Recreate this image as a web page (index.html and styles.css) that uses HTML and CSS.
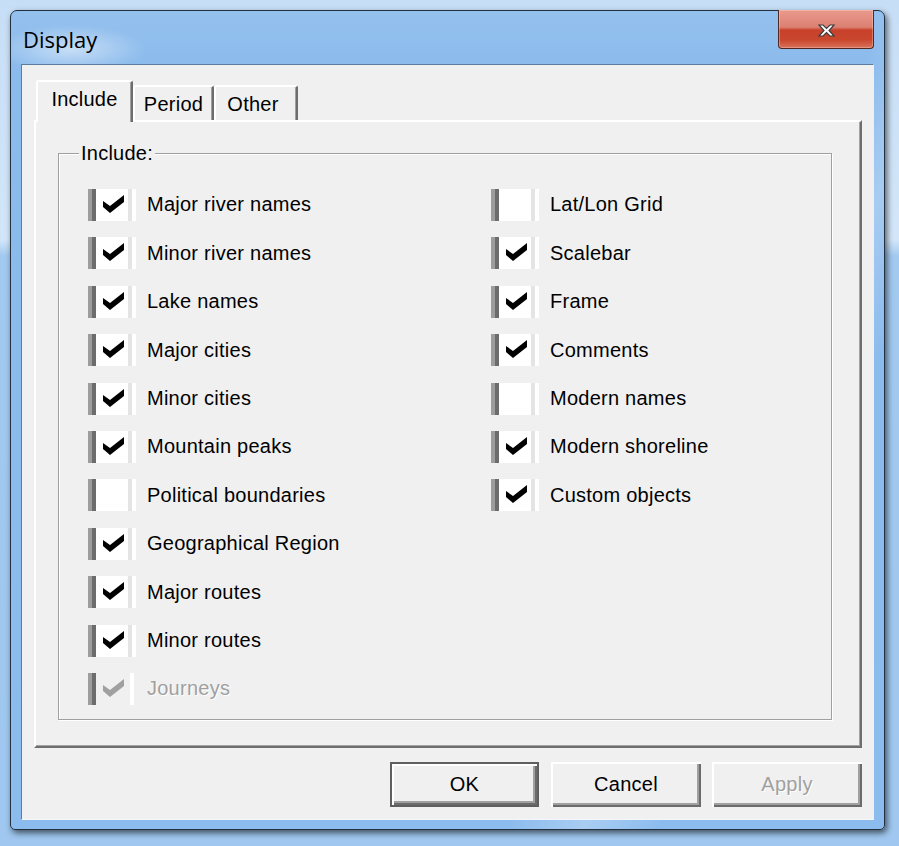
FILE: index.html
```html
<!DOCTYPE html>
<html lang="en">
<head>
    <meta charset="utf-8">
    <title>Display</title>
    <link rel="stylesheet" href="styles.css">
</head>
<body>
    <div class="window">
        <div class="titlebar">
            <div class="title">Display</div>
            <button class="close" title="Close">
                <svg width="19" height="13" viewBox="0 0 19 13">
                    <polygon points="2,1 6,1 9.5,4.5 13,1 17,1 12,6.5 17,12 13,12 9.5,8.5 6,12 2,12 7,6.5" fill="#fff" stroke="#3d3d3d" stroke-width="1.2"/>
                </svg>
            </button>
        </div>
        <div class="client">
            <div class="tabs">
                <div class="tab tab-include active">Include</div>
                <div class="tab tab-period">Period</div>
                <div class="tab tab-other">Other</div>
            </div>
            <div class="panel">
                <div class="group">
                    <span class="legend">Include:</span>
                    <div class="columns">
                        <div class="column column-left">
                            <div class="option"><span class="box"><svg class="check" width="21" height="18" viewBox="0 0 21 18"><polygon points="0,6 7,11 21,0 21,7 7,18 0,12"/></svg></span>Major river names</div>
                            <div class="option"><span class="box"><svg class="check" width="21" height="18" viewBox="0 0 21 18"><polygon points="0,6 7,11 21,0 21,7 7,18 0,12"/></svg></span>Minor river names</div>
                            <div class="option"><span class="box"><svg class="check" width="21" height="18" viewBox="0 0 21 18"><polygon points="0,6 7,11 21,0 21,7 7,18 0,12"/></svg></span>Lake names</div>
                            <div class="option"><span class="box"><svg class="check" width="21" height="18" viewBox="0 0 21 18"><polygon points="0,6 7,11 21,0 21,7 7,18 0,12"/></svg></span>Major cities</div>
                            <div class="option"><span class="box"><svg class="check" width="21" height="18" viewBox="0 0 21 18"><polygon points="0,6 7,11 21,0 21,7 7,18 0,12"/></svg></span>Minor cities</div>
                            <div class="option"><span class="box"><svg class="check" width="21" height="18" viewBox="0 0 21 18"><polygon points="0,6 7,11 21,0 21,7 7,18 0,12"/></svg></span>Mountain peaks</div>
                            <div class="option"><span class="box"></span>Political boundaries</div>
                            <div class="option"><span class="box"><svg class="check" width="21" height="18" viewBox="0 0 21 18"><polygon points="0,6 7,11 21,0 21,7 7,18 0,12"/></svg></span>Geographical Region</div>
                            <div class="option"><span class="box"><svg class="check" width="21" height="18" viewBox="0 0 21 18"><polygon points="0,6 7,11 21,0 21,7 7,18 0,12"/></svg></span>Major routes</div>
                            <div class="option"><span class="box"><svg class="check" width="21" height="18" viewBox="0 0 21 18"><polygon points="0,6 7,11 21,0 21,7 7,18 0,12"/></svg></span>Minor routes</div>
                            <div class="option disabled"><span class="box"><svg class="check" width="21" height="18" viewBox="0 0 21 18"><polygon points="0,6 7,11 21,0 21,7 7,18 0,12"/></svg></span>Journeys</div>
                        </div>
                        <div class="column">
                            <div class="option"><span class="box"></span>Lat/Lon Grid</div>
                            <div class="option"><span class="box"><svg class="check" width="21" height="18" viewBox="0 0 21 18"><polygon points="0,6 7,11 21,0 21,7 7,18 0,12"/></svg></span>Scalebar</div>
                            <div class="option"><span class="box"><svg class="check" width="21" height="18" viewBox="0 0 21 18"><polygon points="0,6 7,11 21,0 21,7 7,18 0,12"/></svg></span>Frame</div>
                            <div class="option"><span class="box"><svg class="check" width="21" height="18" viewBox="0 0 21 18"><polygon points="0,6 7,11 21,0 21,7 7,18 0,12"/></svg></span>Comments</div>
                            <div class="option"><span class="box"></span>Modern names</div>
                            <div class="option"><span class="box"><svg class="check" width="21" height="18" viewBox="0 0 21 18"><polygon points="0,6 7,11 21,0 21,7 7,18 0,12"/></svg></span>Modern shoreline</div>
                            <div class="option"><span class="box"><svg class="check" width="21" height="18" viewBox="0 0 21 18"><polygon points="0,6 7,11 21,0 21,7 7,18 0,12"/></svg></span>Custom objects</div>
                        </div>
                    </div>
                </div>
            </div>
            <div class="buttons">
                <button class="btn btn-default">OK</button>
                <button class="btn btn-cancel">Cancel</button>
                <button class="btn btn-apply" disabled>Apply</button>
            </div>
        </div>
    </div>
</body>
</html>
```
FILE: styles.css
```css
* {
    box-sizing: border-box;
}
body {
    margin: 0;
    height: 846px;
    overflow: hidden;
    padding: 10px 0 0 10px;
    background: linear-gradient(180deg, #c6def6 0%, #d3e6f9 240px, #a2c9ef 256px, #9fc7ef 100%);
    font-family: "Liberation Sans", Arial, sans-serif;
    font-size: 20px;
    letter-spacing: 0.25px;
    color: #000;
}
.window {
    width: 875px;
    height: 820px;
    border: 1px solid #22303f;
    border-radius: 7px 7px 5px 5px;
    padding: 0 10px 9px 10px;
    display: flex;
    flex-direction: column;
    background:
        radial-gradient(ellipse 75px 24px at 60px 38px, rgba(255,255,255,0.5), rgba(255,255,255,0) 100%),
        linear-gradient(115deg, rgba(255,255,255,0) 70%, rgba(255,255,255,0.25) 76%, rgba(255,255,255,0) 82%),
        linear-gradient(180deg, #94c0ee 0%, #8bbbec 60px, #8cbcee 100%);
    box-shadow: 2px 3px 6px rgba(0, 0, 0, 0.6);
}

/* title bar */
.titlebar {
    height: 53px;
    display: flex;
    justify-content: space-between;
    align-items: flex-start;
}
.title {
    font-family: "Open Sans", "Noto Sans", sans-serif;
    font-size: 22px;
    letter-spacing: 0;
    line-height: 30px;
    padding: 13px 0 0 2px;
}
.close {
    width: 96px;
    height: 39px;
    margin-top: -1px;
    padding: 0;
    border: 1px solid #522822;
    border-top: none;
    border-radius: 0 0 4px 4px;
    display: flex;
    align-items: center;
    justify-content: center;
    padding-top: 3px;
    background: linear-gradient(180deg, #e99b8e 0%, #dc8072 45%, #c8402a 53%, #c9472d 78%, #d9715a 100%);
    box-shadow: inset 0 0 0 1px rgba(255, 220, 210, 0.35);
}

/* client area */
.client {
    flex: 1;
    background: #f0f0f0;
    border-top: 1px solid #5c7ca0;
    border-left: 1px solid #5c7ca0;
    border-right: 1px solid #e8f1fb;
    border-bottom: 1px solid #f4f8fd;
    padding: 15px 11px 0 12px;
    display: flex;
    flex-direction: column;
}

/* tabs */
.tabs {
    height: 40px;
    display: flex;
    align-items: flex-end;
}
.tab {
    height: 35px;
    background: #f0f0f0;
    border-top: 2px solid #fff;
    border-left: 2px solid #fff;
    border-right: 2px solid #6d6d6d;
    border-radius: 3px 3px 0 0;
    box-shadow: inset -1px 0 0 #a0a0a0;
    text-align: center;
    padding-top: 6px;
}
.tab.active {
    height: 42px;
    margin-bottom: -2px;
    margin-left: 2px;
    padding-top: 6px;
    position: relative;
    z-index: 1;
}
.tab-include {
    width: 97px;
}
.tab-period {
    width: 81px;
}
.tab-other {
    width: 84px;
    padding-right: 6px;
}

/* tab page */
.panel {
    height: 628px;
    border-top: 2px solid #fff;
    border-left: 2px solid #fff;
    border-right: 2px solid #6e6e6e;
    border-bottom: 2px solid #6e6e6e;
    box-shadow: inset -1px -1px 0 #a3a3a3;
    display: flex;
    flex-direction: column;
}
.group {
    flex: 1;
    margin: 31px 28px 26px 22px;
    border: 1px solid #a0a0a0;
    box-shadow: inset 1px 1px 0 #fff, 1px 1px 0 #fff;
    position: relative;
    padding: 26.8px 0 0 29px;
}
.legend {
    position: absolute;
    top: -12px;
    left: 20px;
    line-height: 22px;
    padding: 0 2px;
    background: #f0f0f0;
}
.columns {
    display: flex;
}
.column-left {
    width: 403px;
}
.option {
    height: 48.4px;
    display: flex;
    align-items: center;
    white-space: nowrap;
}
.box {
    width: 48px;
    height: 32px;
    margin-right: 11px;
    padding: 6px 0 0 15px;
    background: linear-gradient(90deg, #9d9d9d 0, #9d9d9d 4px, #6c6c6c 4px, #6c6c6c 8px, #fff 8px, #fff 40px, #e4e4e4 40px, #e4e4e4 44px, #fff 44px, #fff 48px);
}
.check {
    display: block;
    fill: #000;
}
.option.disabled {
    color: #a0a0a0;
    text-shadow: 1px 1px 0 #fff;
}
.option.disabled .box {
    background: linear-gradient(90deg, #9d9d9d 0, #9d9d9d 4px, #6c6c6c 4px, #6c6c6c 8px, #f0f0f0 8px, #f0f0f0 42px, #fff 42px, #fff 46px, #f0f0f0 46px);
}
.option.disabled .check {
    fill: #a0a0a0;
}

/* buttons */
.buttons {
    display: flex;
    justify-content: flex-end;
    margin-top: 14px;
}
.btn {
    height: 45px;
    width: 150px;
    padding: 0;
    font: inherit;
    letter-spacing: 0.25px;
    color: #000;
    background: #f0f0f0;
    border: none;
    box-shadow: inset 2px 2px 0 #fff, inset -2px -2px 0 #6b6b6b, inset -4px -4px 0 #a0a0a0;
}
.btn-default {
    width: 149px;
    border: 2px solid #5f5f5f;
}
.btn-cancel {
    margin-left: 12px;
}
.btn-apply {
    margin-left: 11px;
    color: #a0a0a0;
    text-shadow: 1px 1px 0 #fff;
}
```
